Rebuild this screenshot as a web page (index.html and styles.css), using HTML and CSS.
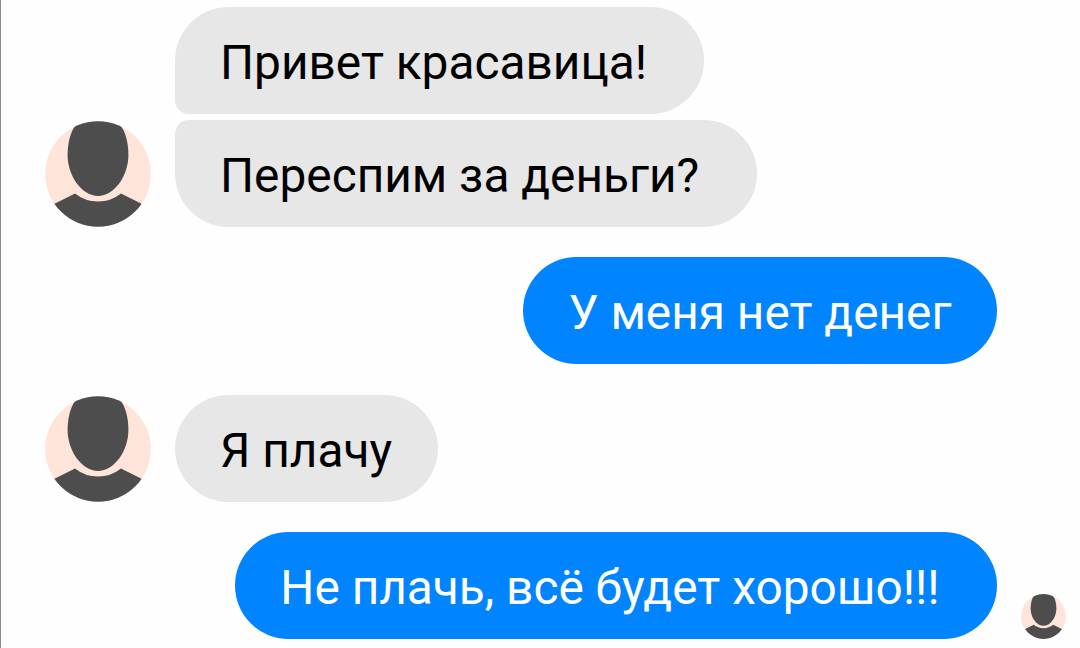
FILE: index.html
```html
<!DOCTYPE html>
<html lang="ru">
<head>
    <meta charset="UTF-8">
    <meta name="viewport" content="width=device-width, initial-scale=1.0">
    <title>Чат</title>
    <link rel="stylesheet" href="styles.css">
</head>
<body>
    <svg class="defs" aria-hidden="true">
        <symbol id="person" viewBox="0 0 106 106">
            <clipPath id="round"><circle cx="53" cy="53" r="52.8"/></clipPath>
            <g clip-path="url(#round)">
                <rect width="106" height="106" fill="#ffe4d9"/>
                <path d="M31 4C25 11 22.6 23 22.6 34C22.6 55 37 75 53 75S83.400 55 83.400 34C83.400 23 81 11 75 4L68-2H38Z" fill="#4d4d4d"/>
                <path d="M0 87L9 83L30 72.500Q40 80.500 53 80.500T76 72.500L97 83L106 87V106H0Z" fill="#4d4d4d"/>
            </g>
        </symbol>
    </svg>
    <div class="chat">
        <div class="group">
            <svg class="avatar"><use href="#person"/></svg>
            <div class="messages">
                <div class="bubble first">Привет красавица! </div>
                <div class="bubble last">Переспим за деньги? </div>
            </div>
        </div>
        <div class="group mine">
            <div class="bubble">У меня нет денег</div>
        </div>
        <div class="group">
            <svg class="avatar"><use href="#person"/></svg>
            <div class="bubble">Я плачу</div>
        </div>
        <div class="group mine">
            <div class="bubble">Не плачь, всё будет хорошо!!! </div>
            <svg class="avatar seen"><use href="#person"/></svg>
        </div>
    </div>
</body>
</html>
```
FILE: styles.css
```css
* {
    box-sizing: border-box;
}
body {
    margin: 0;
    background: #fefefe;
    font-family: Roboto, sans-serif;
    font-size: 47.8px;
}
.defs {
    display: block;
    width: 0;
    height: 0;
}
.chat {
    display: flex;
    flex-direction: column;
    gap: 30.3px;
    height: 648px;
    padding: 6.5px 14px 0 44px;
    border-left: 1px solid #8c8c8c;
    overflow: hidden;
}
.group {
    display: flex;
    align-items: flex-end;
    gap: 24px;
}
.messages {
    display: flex;
    flex-direction: column;
    align-items: flex-start;
    gap: 6.5px;
}
.avatar {
    flex: none;
    width: 106px;
    height: 106px;
}
.bubble {
    height: 107px;
    padding: 4px 45.5px 0 45px;
    border-radius: 54px;
    background: #e7e7e7;
    color: #000;
    line-height: 104px;
    white-space: pre;
}
.first {
    border-bottom-left-radius: 14px;
}
.last {
    border-top-left-radius: 14px;
}
.mine {
    justify-content: flex-end;
    padding-right: 69px;
}
.mine .bubble {
    background: #0084ff;
    color: #fff;
}
.mine .seen {
    width: 45px;
    height: 45px;
    margin-right: -69px;
}
```
